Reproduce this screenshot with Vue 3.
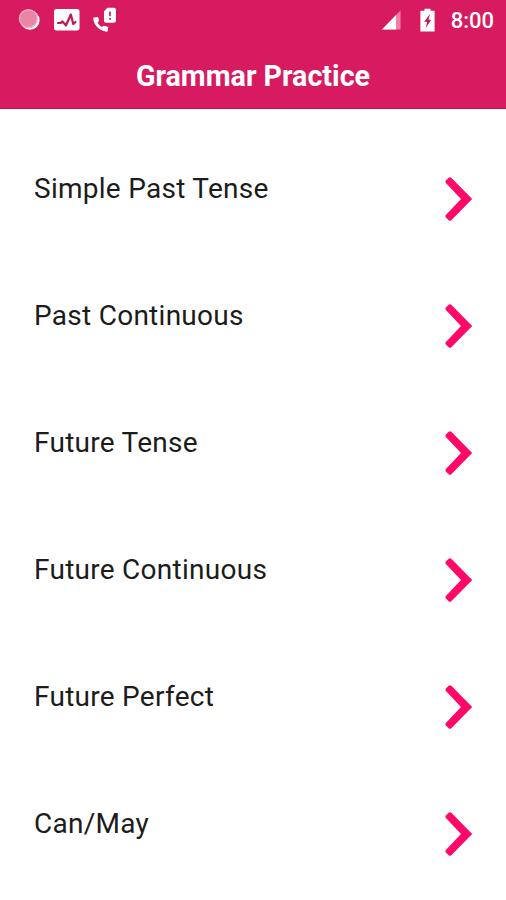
<script setup>
import { ref } from 'vue'

const topics = ref([
  'Simple Past Tense',
  'Past Continuous',
  'Future Tense',
  'Future Continuous',
  'Future Perfect',
  'Can/May',
])
</script>

<template>
  <main class="screen">
    <header class="header">
      <div class="status-bar">
        <div class="status-left">
          <svg class="icon-record" width="24" height="24" viewBox="0 0 24 24">
            <circle cx="12" cy="12.2" r="9.6" fill="#fff" />
            <circle cx="10.4" cy="10.6" r="9.6" fill="#f3adc4" />
            <circle cx="10.4" cy="10.6" r="8.3" fill="#e985a6" />
          </svg>
          <svg class="icon-pulse" width="26" height="22" viewBox="0 0 26 22">
            <rect x="0" y="0" width="25.5" height="21.5" rx="2.5" fill="#fff" />
            <path d="M4 14H6.5L8.5 12.5L12 16.5L16.8 5.5L19.3 15L21.5 13" fill="none" stroke="#c5165a" stroke-width="2.2" stroke-linejoin="round" stroke-linecap="round" />
          </svg>
          <svg class="icon-call" width="24" height="26" viewBox="0 0 24 26">
            <path d="M1 10.5L4.2 10C5 10 5.4 10.5 5.5 11.2L6 14L4.6 15.8C5.7 17.8 7.2 19.1 9 20L10.7 18.7L14 19.4C14.8 19.6 15.2 20 15.1 20.8L14.8 23.7C14.7 24.4 14.2 24.8 13.5 24.7C6.5 24 .8 18.3 .2 11.6C.1 11 .4 10.6 1 10.5Z" fill="#fff" />
            <path d="M14.5 .7H20.8Q23 .7 23 2.9V13.5Q23 15.7 20.8 15.7H13.2Q11 15.7 11 13.5V4.2Z" fill="#fff" />
            <path d="M17 4.5V9.2M17 11V12.8" stroke="#d81b60" stroke-width="1.7" />
          </svg>
        </div>
        <div class="status-right">
          <svg class="icon-signal" width="20" height="20" viewBox="0 0 20 20">
            <path d="M18.5 .5V19.5H0Z" fill="#e984a6" />
            <path d="M14 5V19.5H0Z" fill="#fff" />
          </svg>
          <svg class="icon-battery" width="16" height="24" viewBox="0 0 16 24">
            <path d="M4.5 .8H10.5V2.8H14.6V23.5H.4V2.8H4.5Z" fill="#fff" />
            <path d="M10.2 5.8L4.2 13.8H7.2L5.8 20L11.2 11.8H8.4Z" fill="#c5165a" />
          </svg>
          <span class="clock">8:00</span>
        </div>
      </div>
      <h1 class="title">Grammar Practice</h1>
    </header>
    <ul class="topics">
      <li v-for="topic in topics" :key="topic" class="topic">
        <span class="topic-name">{{ topic }}</span>
        <svg class="chevron" width="28" height="46" viewBox="0 0 28 46">
          <path d="M6.3 1.8L27.2 23L6.3 44.2Q5 45.2 3.7 44.2L.9 41.4Q-.1 40.1 .9 38.9L16 23L.9 7.1Q-.1 5.9 .9 4.6L3.7 1.8Q5 .8 6.3 1.8Z" fill="#ff0868" />
        </svg>
      </li>
    </ul>
  </main>
</template>

<style>
body { margin: 0; background: #fff; }
</style>

<style scoped>
.screen { height: 900px; overflow: hidden; background: #fff; font-family: Roboto, sans-serif; }
.header { box-sizing: border-box; height: 109px; background: #d81b60; border-bottom: 1px solid #c90f50; color: #fff; }
.status-bar { display: flex; justify-content: space-between; height: 40px; padding: 0 12px 0 18px; }
.status-left, .status-right { display: flex; align-items: center; }
.icon-pulse { margin-left: 12px; }
.icon-call { margin-left: 13px; }
.icon-battery { margin-left: 18px; }
.clock { margin-left: 15px; padding-top: 2px; font-size: 22px; font-weight: 500; line-height: 26px; }
.title { margin: 0; font-size: 28.7px; font-weight: 700; line-height: 72px; text-align: center; }
.topics { margin: 0; padding: 67px 33px 0 34px; list-style: none; }
.topic { display: flex; justify-content: space-between; align-items: flex-start; height: 127px; }
.topic-name { font-size: 28px; line-height: 25px; letter-spacing: 0.27px; color: #1c1c1c; }
</style>
